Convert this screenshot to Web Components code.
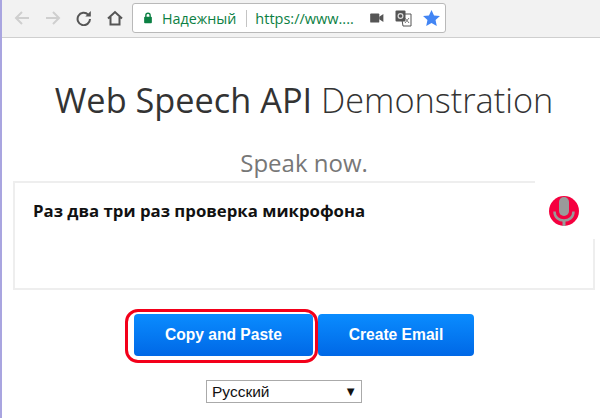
<!DOCTYPE html>
<html>
<head>
<meta charset="utf-8">
<style>
html, body { margin: 0; height: 100%; background: #fff; overflow: hidden; }
body { font-family: "Open Sans", sans-serif; }
</style>
</head>
<body>
<demo-app>
    <browser-toolbar slot="bar">
        <span slot="status">Надежный</span>
        <span slot="url">https://www....</span>
    </browser-toolbar>
    <speech-panel>
        <span slot="title">Web Speech API</span>
        <span slot="title-light">Demonstration</span>
        <span slot="hint">Speak now.</span>
        <span slot="result">Раз два три раз проверка микрофона</span>
    </speech-panel>
    <action-buttons>
        <blue-button highlighted>Copy and Paste</blue-button>
        <blue-button>Create Email</blue-button>
    </action-buttons>
    <lang-select>Русский</lang-select>
</demo-app>

<script>
class DemoApp extends HTMLElement {
    constructor() {
        super();
        this.attachShadow({mode: 'open'});
        this.shadowRoot.innerHTML = `
            <style>
                :host {
                    display: flex;
                    flex-direction: column;
                    height: 418px;
                    border-left: 2px solid #a9a5e0;
                    box-sizing: border-box;
                }
            </style>
            <slot name="bar"></slot>
            <slot></slot>
        `;
    }
}

class BrowserToolbar extends HTMLElement {
    constructor() {
        super();
        this.attachShadow({mode: 'open'});
        this.shadowRoot.innerHTML = `
            <style>
                :host {
                    display: flex;
                    align-items: center;
                    height: 38px;
                    box-sizing: border-box;
                    padding: 0 0 1px 12px;
                    background: #f2f2f2;
                    border-bottom: 1px solid #cfcfcf;
                    flex: none;
                }
                .nav {
                    display: flex;
                    align-items: center;
                    gap: 15px;
                    width: 118px;
                    flex: none;
                }
                svg { display: block; flex: none; }
                .omni {
                    display: flex;
                    align-items: center;
                    width: 314px;
                    height: 30px;
                    box-sizing: border-box;
                    padding-left: 10px;
                    background: #fff;
                    border: 1px solid #b9b9b9;
                    border-radius: 3px;
                    font: 14.300px "Open Sans", sans-serif;
                }
                .status { color: #0b8043; margin-left: 9px; }
                .sep { width: 1px; height: 17px; background: #c4c4c4; margin: 0 8px 0 10px; }
                .url { color: #0b8043; flex: 1; white-space: nowrap; font-size: 14.500px; }
                .tools { display: flex; align-items: center; gap: 11px; margin-right: 5px; }
            </style>
            <div class="nav">
                <svg width="16" height="16" viewBox="2 2 16 16" fill="none" stroke="#cfcfcf" stroke-width="2"><path d="M17 10H4M10 4l-6 6 6 6"/></svg>
                <svg width="16" height="16" viewBox="2 2 16 16" fill="none" stroke="#cfcfcf" stroke-width="2"><path d="M3 10h13M10 4l6 6-6 6"/></svg>
                <svg width="16" height="16" viewBox="1 1 16 16" fill="none" stroke="#555" stroke-width="2"><path d="M15 10a6.200 6.200 0 1 1-1.800-4.400"/><path d="M15.800 2v5.500h-5.500z" fill="#555" stroke="none"/></svg>
                <svg width="16" height="16" viewBox="1 1 16 16" fill="none" stroke="#555" stroke-width="2"><path d="M2 9.500 9 3l7 6.500M4.500 8v7.500h9V8"/></svg>
            </div>
            <div class="omni">
                <svg width="10" height="12" viewBox="0 0 11 14"><path d="M3 6V4a2.500 2.500 0 0 1 5 0v2" fill="none" stroke="#0b8043" stroke-width="1.600"/><rect x="1" y="5.500" width="9" height="7.500" rx="1" fill="#0b8043"/></svg>
                <span class="status"><slot name="status"></slot></span>
                <span class="sep"></span>
                <span class="url"><slot name="url"></slot></span>
                <div class="tools">
                    <svg width="14" height="10" viewBox="0 0 15 11"><rect y="0.500" width="10" height="10" rx="1" fill="#555"/><path d="M10 4l4.500-3v9L10 7z" fill="#555"/></svg>
                    <svg width="17" height="17" viewBox="0 0 17 17"><path d="M6 4h10v12H8z" fill="#fff" stroke="#555"/><rect x="0.500" y="0.500" width="10" height="11" rx="1" fill="#555"/><circle cx="5.500" cy="6" r="2.400" fill="none" stroke="#ddd" stroke-width="1.200"/><path d="M10 8l4 5M14 8l-4 5" stroke="#777"/></svg>
                    <svg width="17" height="16" viewBox="0 0 18 17"><path d="M9 0l2.700 5.800 6.300.7-4.700 4.200 1.300 6.300L9 13.800 3.400 17l1.300-6.300L0 6.500l6.300-.7z" fill="#4285f4"/></svg>
                </div>
            </div>
        `;
    }
}

class SpeechPanel extends HTMLElement {
    constructor() {
        super();
        this.attachShadow({mode: 'open'});
        this.shadowRoot.innerHTML = `
            <style>
                :host {
                    display: flex;
                    flex-direction: column;
                    align-items: center;
                    padding: 38px 5px 0 11px;
                    color: #333;
                }
                h1 {
                    margin: 0;
                    font: 400 34.300px/48px "Open Sans", sans-serif;
                    white-space: nowrap;
                }
                h1 .light { font-weight: 300; }
                .hint {
                    margin-top: 23px;
                    font: 400 24px/32px "Open Sans", sans-serif;
                    color: #777;
                }
                .box {
                    align-self: stretch;
                    box-sizing: border-box;
                    height: 109px;
                    margin-top: 2px;
                    padding: 17px 18px;
                    border: 2px solid #eee;
                    font: 700 16.800px/22px "Open Sans", sans-serif;
                    color: #111;
                    position: relative;
                }
                .cover {
                    position: absolute;
                    top: -2px;
                    right: -2px;
                    width: 60px;
                    height: 58px;
                    background: #fff;
                }
                .mic {
                    position: absolute;
                    top: 12px;
                    right: 13px;
                    display: block;
                }
            </style>
            <h1><slot name="title"></slot> <span class="light"><slot name="title-light"></slot></span></h1>
            <div class="hint"><slot name="hint"></slot></div>
            <div class="box">
                <slot name="result"></slot>
                <div class="cover"></div>
                <svg class="mic" width="32" height="32" viewBox="0 0 32 32">
                    <circle cx="16" cy="16" r="15" fill="#f5003f"/>
                    <rect x="11" y="2" width="10" height="19" rx="5" fill="#9a9a9a"/>
                    <path d="M6.500 16.500c0 6 4.500 9 9.500 9s9.500-3 9.500-9" fill="none" stroke="#9a9a9a" stroke-width="2.500"/>
                    <rect x="14.500" y="25" width="3" height="6" fill="#9a9a9a"/>
                </svg>
            </div>
        `;
    }
}

class ActionButtons extends HTMLElement {
    constructor() {
        super();
        this.attachShadow({mode: 'open'});
        this.shadowRoot.innerHTML = `
            <style>
                :host {
                    display: flex;
                    padding: 24px 0 0 132px;
                }
            </style>
            <slot></slot>
        `;
    }
}

class BlueButton extends HTMLElement {
    constructor() {
        super();
        this.attachShadow({mode: 'open'});
        this.shadowRoot.innerHTML = `
            <style>
                :host {
                    display: flex;
                    align-items: center;
                    justify-content: center;
                    width: 156px;
                    height: 42px;
                    color: #fff;
                    font: 700 15.600px "Liberation Sans", sans-serif;
                    background: linear-gradient(#0a8cff, #0068e6);
                    border-radius: 4px;
                    position: relative;
                }
                :host([highlighted]) {
                    width: 179px;
                    margin-right: 5px;
                }
                .ring {
                    display: none;
                    position: absolute;
                    left: -9px;
                    top: -5px;
                    right: -5px;
                    bottom: -7px;
                    border: 3.500px solid #f3001a;
                    border-radius: 13px;
                }
                :host([highlighted]) .ring { display: block; }
            </style>
            <slot></slot>
            <div class="ring"></div>
        `;
    }
}

class LangSelect extends HTMLElement {
    constructor() {
        super();
        this.attachShadow({mode: 'open'});
        this.shadowRoot.innerHTML = `
            <style>
                :host {
                    display: flex;
                    align-items: center;
                    justify-content: space-between;
                    align-self: flex-start;
                    box-sizing: border-box;
                    width: 156px;
                    height: 23px;
                    margin: 24px 0 0 204px;
                    padding: 0 4px 0 5px;
                    border: 1px solid #aaa;
                    color: #111;
                    font: 15.500px "Liberation Sans", sans-serif;
                }
                .arrow { font-size: 13px; color: #111; }
            </style>
            <slot></slot>
            <span class="arrow">▼</span>
        `;
    }
}

customElements.define('demo-app', DemoApp);
customElements.define('browser-toolbar', BrowserToolbar);
customElements.define('speech-panel', SpeechPanel);
customElements.define('action-buttons', ActionButtons);
customElements.define('blue-button', BlueButton);
customElements.define('lang-select', LangSelect);
</script>
</body>
</html>
